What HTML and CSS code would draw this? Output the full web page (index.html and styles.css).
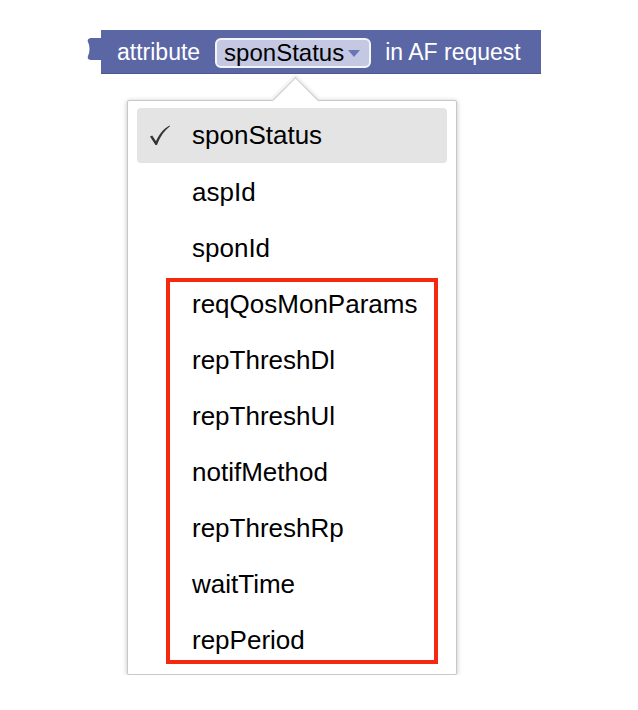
FILE: index.html
```html
<!DOCTYPE html>
<html lang="en">
<head>
    <meta charset="UTF-8">
    <meta name="viewport" content="width=device-width, initial-scale=1.0">
    <title>attribute in AF request</title>
    <link rel="stylesheet" href="styles.css">
</head>
<body>
    <div class="stage">
        <div class="block-row">
            <svg class="tab" width="14" height="22" viewBox="0 0 14 22">
                <path d="M14 0 H5 C2 0 0 1 1 4 C3 8 3 14 1 18 C0 21 2 22 5 22 H14 Z" fill="#5b67a5"/>
            </svg>
            <div class="block">
                <span class="label">attribute</span>
                <span class="field">
                    <span>sponStatus</span>
                    <svg class="caret" width="12" height="7" viewBox="0 0 12 7">
                        <path d="M0 0 H12 L6 7 Z" fill="#6a76b4"/>
                    </svg>
                </span>
                <span class="label">in AF request</span>
            </div>
        </div>

        <div class="dropdown">
            <div class="pointer"></div>
            <div class="menu-item selected">
                <span class="check">
                    <svg width="22" height="22" viewBox="0 0 22 22">
                        <path d="M1 11.5 L3.2 10.6 L7 16.2 C10 9.5 14 4 20.5 0.5 L21 1.3 C15.5 5.5 11.5 11 8 20 L6.5 20 Z" fill="#333"/>
                    </svg>
                </span>
                <span>sponStatus</span>
            </div>
            <div class="menu-item"><span class="check"></span><span>aspId</span></div>
            <div class="menu-item"><span class="check"></span><span>sponId</span></div>
            <div class="menu-item"><span class="check"></span><span>reqQosMonParams</span></div>
            <div class="menu-item"><span class="check"></span><span>repThreshDl</span></div>
            <div class="menu-item"><span class="check"></span><span>repThreshUl</span></div>
            <div class="menu-item"><span class="check"></span><span>notifMethod</span></div>
            <div class="menu-item"><span class="check"></span><span>repThreshRp</span></div>
            <div class="menu-item"><span class="check"></span><span>waitTime</span></div>
            <div class="menu-item"><span class="check"></span><span>repPeriod</span></div>

            <!-- annotation box -->
            <div class="highlight-box"></div>
        </div>
    </div>
</body>
</html>
```

FILE: styles.css
```css
body {
    font-family: "Liberation Sans", Arial, Helvetica, sans-serif;
    background-color: #ffffff;
    margin: 0;
    padding: 0;
}

.stage {
    padding: 30px 0 0 87px;
}

.block-row {
    display: flex;
    align-items: flex-start;
}

.tab {
    margin-top: 8px;
    display: block;
}

.block {
    display: flex;
    align-items: center;
    height: 44px;
    padding: 2px 20px 0 16px;
    background-color: #5b67a5;
    border-bottom: 1px solid #4c5792;
    box-sizing: border-box;
    color: #ffffff;
    font-size: 23px;
}

.field {
    display: flex;
    align-items: center;
    height: 30px;
    margin: 0 14px 0 15px;
    padding: 0 9px 0 7px;
    background-color: #c4c8e3;
    border: 2px solid #f4f5fb;
    border-radius: 6px;
    box-sizing: border-box;
    color: #000000;
    font-size: 24px;
}

.caret {
    margin-left: 4px;
    margin-top: 2px;
}

.dropdown {
    position: relative;
    width: 330px;
    margin: 26px 0 0 40px;
    padding: 7px 9px 6px 9px;
    background-color: #ffffff;
    border: 1px solid #c8c8c8;
    border-radius: 2px;
    box-shadow: 0 1px 5px rgba(0, 0, 0, 0.25);
    box-sizing: border-box;
}

.pointer {
    position: absolute;
    left: 151px;
    top: -17px;
    width: 32px;
    height: 32px;
    background-color: #ffffff;
    border-top: 1px solid #c8c8c8;
    border-left: 1px solid #c8c8c8;
    transform: rotate(45deg);
    box-shadow: -2px -2px 3px rgba(0, 0, 0, 0.08);
}

.menu-item {
    position: relative;
    display: flex;
    align-items: center;
    height: 56px;
    padding-left: 12px;
    font-size: 26px;
    color: #000000;
    border-radius: 4px;
}

.menu-item.selected {
    background-color: #e4e4e4;
    height: 55px;
    margin-bottom: 1px;
}

.check {
    width: 43px;
    display: flex;
    align-items: center;
}

.highlight-box {
    position: absolute;
    left: 38px;
    top: 177px;
    width: 272px;
    height: 386px;
    border: 4px solid #f4290f;
    box-sizing: border-box;
}
```
